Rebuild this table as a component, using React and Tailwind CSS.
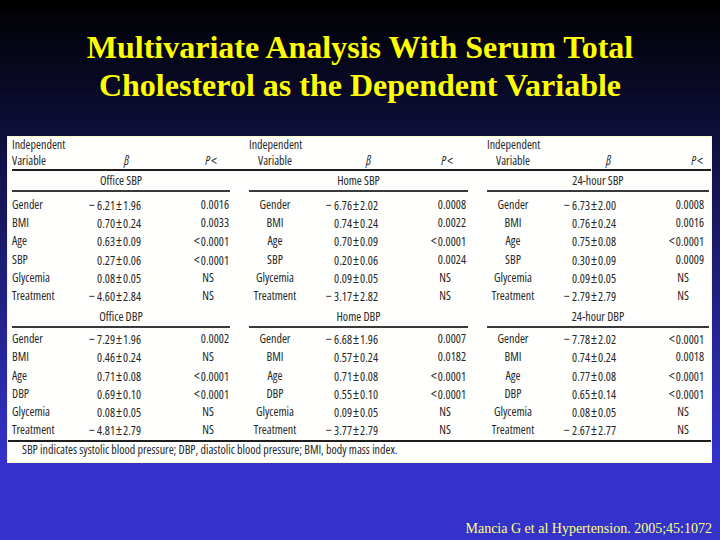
import React from 'react';

const BLOCKS = [
  {
    key: 'sbp',
    sections: [
      {
        label: 'Office SBP',
        rows: [
          ['Gender', '−6.21±1.96', '0.0016'],
          ['BMI', '0.70±0.24', '0.0033'],
          ['Age', '0.63±0.09', '<0.0001'],
          ['SBP', '0.27±0.06', '<0.0001'],
          ['Glycemia', '0.08±0.05', 'NS'],
          ['Treatment', '−4.60±2.84', 'NS'],
        ],
      },
      {
        label: 'Home SBP',
        rows: [
          ['Gender', '−6.76±2.02', '0.0008'],
          ['BMI', '0.74±0.24', '0.0022'],
          ['Age', '0.70±0.09', '<0.0001'],
          ['SBP', '0.20±0.06', '0.0024'],
          ['Glycemia', '0.09±0.05', 'NS'],
          ['Treatment', '−3.17±2.82', 'NS'],
        ],
      },
      {
        label: '24-hour SBP',
        rows: [
          ['Gender', '−6.73±2.00', '0.0008'],
          ['BMI', '0.76±0.24', '0.0016'],
          ['Age', '0.75±0.08', '<0.0001'],
          ['SBP', '0.30±0.09', '0.0009'],
          ['Glycemia', '0.09±0.05', 'NS'],
          ['Treatment', '−2.79±2.79', 'NS'],
        ],
      },
    ],
  },
  {
    key: 'dbp',
    sections: [
      {
        label: 'Office DBP',
        rows: [
          ['Gender', '−7.29±1.96', '0.0002'],
          ['BMI', '0.46±0.24', 'NS'],
          ['Age', '0.71±0.08', '<0.0001'],
          ['DBP', '0.69±0.10', '<0.0001'],
          ['Glycemia', '0.08±0.05', 'NS'],
          ['Treatment', '−4.81±2.79', 'NS'],
        ],
      },
      {
        label: 'Home DBP',
        rows: [
          ['Gender', '−6.68±1.96', '0.0007'],
          ['BMI', '0.57±0.24', '0.0182'],
          ['Age', '0.71±0.08', '<0.0001'],
          ['DBP', '0.55±0.10', '<0.0001'],
          ['Glycemia', '0.09±0.05', 'NS'],
          ['Treatment', '−3.77±2.79', 'NS'],
        ],
      },
      {
        label: '24-hour DBP',
        rows: [
          ['Gender', '−7.78±2.02', '<0.0001'],
          ['BMI', '0.74±0.24', '0.0018'],
          ['Age', '0.77±0.08', '<0.0001'],
          ['DBP', '0.65±0.14', '<0.0001'],
          ['Glycemia', '0.08±0.05', 'NS'],
          ['Treatment', '−2.67±2.77', 'NS'],
        ],
      },
    ],
  },
];

// β / P< header offsets differ a little per column group in the source slide
const HEAD_PAD = [
  { beta: 'pr-[12px]', p: 'pr-[12px]' },
  { beta: 'pr-[7px]', p: 'pr-[13px]' },
  { beta: 'pr-[5px]', p: 'pr-[1px]' },
];

function Beta({ value }) {
  const neg = value.startsWith('−');
  const [a, b] = value.replace('−', '').split('±');
  return (
    <>
      {neg && <span className="mr-[2px] text-[14px]">−</span>}
      {a}
      <span className="px-[1px] text-[14px]">±</span>
      {b}
    </>
  );
}

function PValue({ value }) {
  if (value === 'NS') return <div className="text-right pr-[15px]">NS</div>;
  const less = value.startsWith('<');
  return (
    <div className="text-right whitespace-nowrap">
      {less && <span className="mr-[1px] text-[14px]">&lt;</span>}
      {value.replace('<', '')}
    </div>
  );
}

function HeaderCell({ index }) {
  const first = index === 0;
  const pad = HEAD_PAD[index];
  return (
    <div className="grid grid-cols-[52px_77px_88px] leading-[16px]">
      <div className={first ? 'text-left whitespace-nowrap' : 'text-center whitespace-nowrap'}>
        <div>Independent</div>
        <div>Variable</div>
      </div>
      <div className={`flex items-end justify-end italic ${pad.beta}`}>β</div>
      <div className={`flex items-end justify-end whitespace-nowrap ${pad.p}`}>
        <span className="italic">P</span>
        <span className="ml-[1px] text-[14px]">&lt;</span>
      </div>
    </div>
  );
}

function Section({ section, first, second }) {
  return (
    <div>
      <div className={second ? 'mt-[2px] h-[19px] leading-[19px] text-center' : 'h-[19px] leading-[19px] text-center'}>
        {section.label}
      </div>
      <div className="h-[2px] bg-[#3a3a3a]" />
      <div className={second ? 'pt-[2px]' : 'pt-[4px]'}>
        {section.rows.map(([name, beta, p]) => (
          <div key={name} className="grid grid-cols-[52px_77px_88px] h-[18.2px] leading-[18px]">
            <div className={first ? 'text-left whitespace-nowrap' : 'text-center whitespace-nowrap'}>{name}</div>
            <div className="text-right whitespace-nowrap">
              <Beta value={beta} />
            </div>
            <PValue value={p} />
          </div>
        ))}
      </div>
    </div>
  );
}

export default function App() {
  return (
    <div className="w-[720px] h-[540px] flex flex-col bg-[linear-gradient(to_bottom,#000000_0%,#3333cc_86%,#3333cc_100%)] overflow-hidden">
      <h1 className="pt-[28px] text-center text-[32px] leading-[38px] font-bold text-[#ffff00] font-['Liberation_Serif','Times_New_Roman',serif]">
        Multivariate Analysis With Serum Total
        <br />
        Cholesterol as the Dependent Variable
      </h1>

      <div className="mt-[32px] ml-[7px] w-[705px] h-[327px] border border-[#fbfbc8] bg-[#fffffd] text-[12px] text-[#262626] font-['Open_Sans',sans-serif] font-stretch-condensed">
        <div className="pl-[4px]">
          <div className="grid grid-cols-[218px_219px_222px] gap-x-[19px]">
            <HeaderCell index={0} />
            <HeaderCell index={1} />
            <HeaderCell index={2} />
          </div>
          <div className="h-[2px] bg-[#1e1e1e]" />

          {BLOCKS.map((block, b) => (
            <div key={block.key} className="grid grid-cols-[218px_219px_222px] gap-x-[19px]">
              {block.sections.map((section, i) => (
                <Section key={section.label} section={section} first={i === 0} second={b === 1} />
              ))}
            </div>
          ))}
        </div>
        <div className="mt-[1px] h-[2px] bg-[#1e1e1e]" />
        <div className="pl-[14px] h-[16px] leading-[16px]">
          SBP indicates systolic blood pressure; DBP, diastolic blood pressure; BMI, body mass index.
        </div>
      </div>

      <div className="mt-[58px] pr-[8px] text-right text-[14px] leading-[16px] text-[#ffff80] font-['Liberation_Serif','Times_New_Roman',serif]">
        Mancia G et al Hypertension. 2005;45:1072
      </div>
    </div>
  );
}
